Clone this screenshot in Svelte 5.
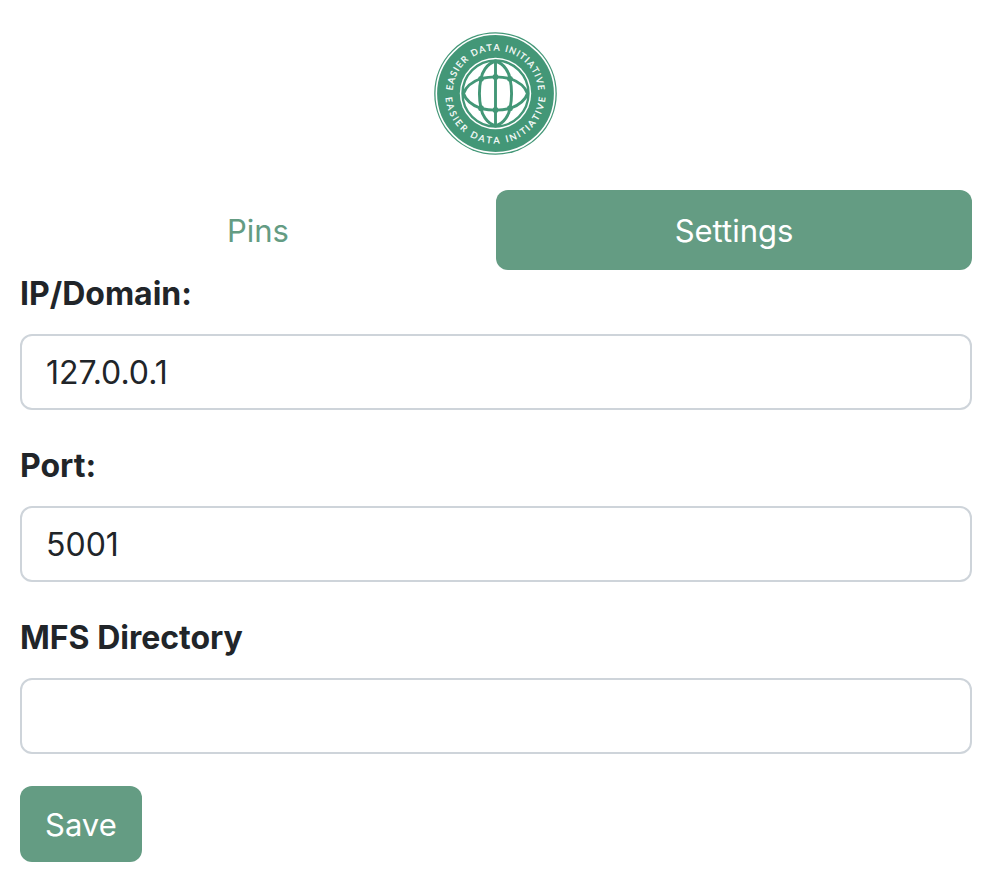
<script>
  let activeTab = $state('Settings');
  let host = $state('127.0.0.1');
  let port = $state('5001');
  let directory = $state('');

  const tabs = ['Pins', 'Settings'];

  // Share of the ring that each capital takes, in hundredths of an em.
  const advance = { E: 58, A: 68, S: 55, I: 28, R: 63, D: 76, T: 58, N: 76, V: 67, ' ': 32 };
  const gap = 14;
  const span = 172;

  function spread(phrase) {
    const chars = [...phrase];
    const total = chars.reduce((sum, c) => sum + advance[c] + gap, -gap);
    let at = 0;
    return chars.map((char) => {
      const middle = at + advance[char] / 2;
      at += advance[char] + gap;
      return { char, angle: (middle / total - 1 / 2) * span };
    }).filter((g) => g.char !== ' ');
  }

  const ring = spread('EASIER DATA INITIATIVE');
</script>

<main>
  <header>
    <svg class="logo" viewBox="0 0 124 124" role="img" aria-label="Easier Data Initiative">
      <circle cx="61.5" cy="61.5" r="61.3" fill="#439777" />
      <circle cx="61.5" cy="61.5" r="59.2" fill="none" stroke="#fff" stroke-width="1.6" />
      <circle cx="61.5" cy="61.5" r="35.7" fill="#fff" />
      <g fill="none" stroke="#439777" stroke-width="2.9">
        <circle cx="61.5" cy="61.5" r="33" stroke-width="2.4" />
        <path d="M61.5 28.5V94.5" />
        <path d="M61.5 29C52 32 48 41 47 46.500C45 56 45 67 47 76.500C48 82 52 91 61.5 94C71 91 75 82 76 76.500C78 67 78 56 76 46.500C75 41 71 32 61.5 29Z" />
        <path d="M29.5 61.5C32 54 40 49 47 46.500C56 44.500 67 44.500 76 46.500C83 49 91 54 93.5 61.5C91 69 83 74 76 76.500C67 78.500 56 78.500 47 76.500C40 74 32 69 29.5 61.5Z" />
      </g>
      <g fill="#439777">
        <circle cx="61.5" cy="45" r="2.9" />
        <circle cx="61.5" cy="78" r="2.9" />
        <circle cx="47" cy="46.8" r="2.9" />
        <circle cx="76" cy="46.8" r="2.9" />
        <circle cx="47" cy="76.2" r="2.9" />
        <circle cx="76" cy="76.2" r="2.9" />
      </g>
      <g class="motto">
        {#each ring as { char, angle }}
          <text x="61.5" y="18.5" transform="rotate({angle} 61.5 61.5)">{char}</text>
        {/each}
        {#each ring as { char, angle }}
          <text x="61.5" y="111.5" transform="rotate({-angle} 61.5 61.5)">{char}</text>
        {/each}
      </g>
    </svg>
  </header>

  <nav>
    {#each tabs as tab}
      <button type="button" class="tab" class:active={activeTab === tab} onclick={() => (activeTab = tab)}>{tab}</button>
    {/each}
  </nav>

  <form onsubmit={(e) => e.preventDefault()}>
    <div class="field">
      <label for="host">IP/Domain:</label>
      <input id="host" type="text" bind:value={host} />
    </div>
    <div class="field">
      <label for="port">Port:</label>
      <input id="port" type="text" bind:value={port} />
    </div>
    <div class="field">
      <label for="directory">MFS Directory</label>
      <input id="directory" type="text" bind:value={directory} />
    </div>
    <button type="submit" class="save">Save</button>
  </form>
</main>

<style>
  :global(body) {
    margin: 0;
    background: #fff;
  }

  main {
    padding: 32px 14px 22px 20px;
    color: #212529;
    font-family: Inter, 'Liberation Sans', sans-serif;
    font-size: 32px;
    line-height: 48px;
  }

  header {
    display: flex;
    justify-content: center;
    margin-bottom: 34px;
  }

  .logo {
    display: block;
    width: 124px;
    height: 124px;
  }

  .motto {
    fill: #fff;
    stroke: #fff;
    stroke-width: 0.2px;
    font-family: Lato, sans-serif;
    font-size: 9px;
    text-anchor: middle;
  }

  nav {
    display: flex;
  }

  button,
  input {
    box-sizing: border-box;
    margin: 0;
    font: inherit;
    border-radius: 12px;
  }

  button {
    border: 0;
    font-size: 31px;
    cursor: pointer;
  }

  .tab {
    flex: 1;
    padding: 17px 32px 15px;
    background: transparent;
    color: #649c83;
  }

  .tab.active,
  .save {
    background: #649c83;
    color: #fff;
  }

  form {
    display: flex;
    flex-direction: column;
    align-items: flex-start;
    gap: 32px;
  }

  .field {
    display: flex;
    flex-direction: column;
    gap: 16px;
    width: 100%;
  }

  label {
    font-weight: 700;
  }

  input {
    width: 100%;
    height: 76px;
    padding: 12px 24px;
    border: 2px solid #ced4da;
    background: #fff;
    color: #212529;
  }

  .save {
    padding: 15px 25px 13px;
  }
</style>
